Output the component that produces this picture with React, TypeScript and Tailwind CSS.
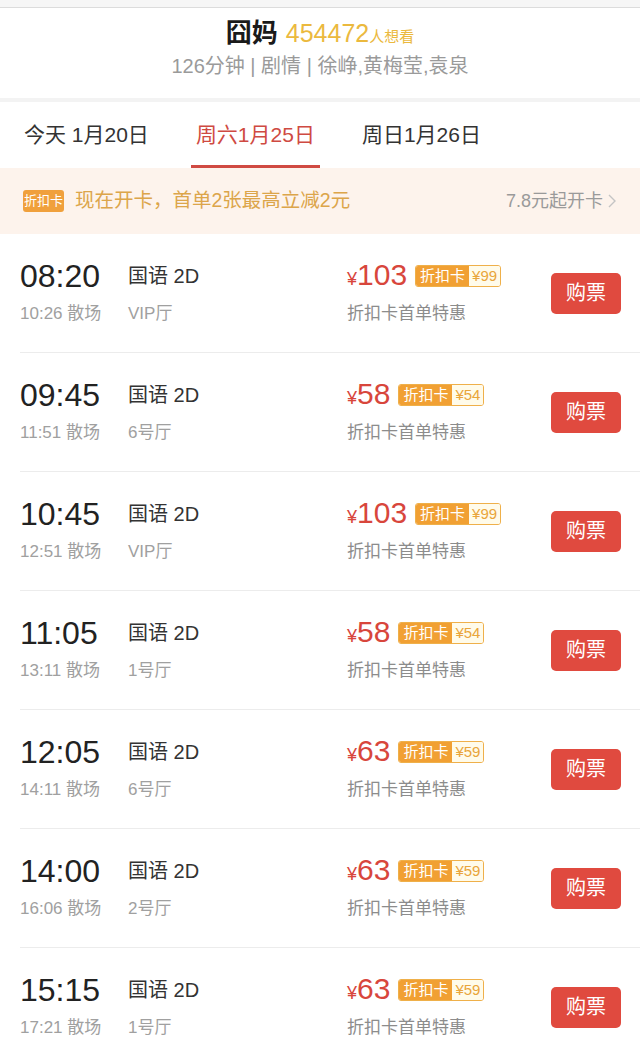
const shows = [
  { start: "08:20", end: "10:26", hall: "VIP厅", price: "103", card: "99" },
  { start: "09:45", end: "11:51", hall: "6号厅", price: "58", card: "54" },
  { start: "10:45", end: "12:51", hall: "VIP厅", price: "103", card: "99" },
  { start: "11:05", end: "13:11", hall: "1号厅", price: "58", card: "54" },
  { start: "12:05", end: "14:11", hall: "6号厅", price: "63", card: "59" },
  { start: "14:00", end: "16:06", hall: "2号厅", price: "63", card: "59" },
  { start: "15:15", end: "17:21", hall: "1号厅", price: "63", card: "59" },
];

const tabs = [
  { label: "今天 1月20日", active: false },
  { label: "周六1月25日", active: true },
  { label: "周日1月26日", active: false },
];

const ShowRow = ({ start, end, hall, price, card }: (typeof shows)[number]) => (
  <div className="pl-5">
    <div className="flex h-[119px] items-center border-b border-[#ececec] pr-[19px]">
      <div className="grid flex-1 grid-cols-[108px_219px_1fr] grid-rows-[36px_24px] gap-y-2 self-start pt-6">
        <div className="flex items-center text-[32px] leading-none text-[#222]">{start}</div>
        <div className="flex items-center text-[20px] text-[#333]">国语 2D</div>
        <div className="flex items-center">
          <span className="text-[#d8463c]">
            <span className="text-[18px]">¥</span>
            <span className="text-[30px] leading-none">{price}</span>
          </span>
          <span className="ml-2 flex h-[22px] items-stretch overflow-hidden rounded-[3px] border border-[#efb04a] text-[15px] leading-[20px]">
            <span className="bg-[#f1a033] px-[4px] text-white">折扣卡</span>
            <span className="bg-[#fffbea] px-[3px] text-[#e9a53a]">¥{card}</span>
          </span>
        </div>
        <div className="flex items-center text-[17px] text-[#a0a0a0]">{end} 散场</div>
        <div className="flex items-center text-[17px] text-[#a0a0a0]">{hall}</div>
        <div className="flex items-center text-[17px] text-[#8c8c8c]">折扣卡首单特惠</div>
      </div>
      <button className="flex h-[41px] w-[70px] items-center justify-center rounded-[5px] bg-[#e04a3f] text-[20px] text-white">
        购票
      </button>
    </div>
  </div>
);

export default function App() {
  return (
    <div
      className="min-h-[1047px] w-[640px] overflow-hidden bg-white"
      style={{ fontFamily: '"Liberation Sans", "Noto Sans CJK SC", sans-serif' }}
    >
      <div className="h-2 border-b border-[#dcdcdc] bg-[#f6f6f6]" />

      <div className="flex h-[90px] flex-col items-center pt-[6px]">
        <div className="flex items-baseline">
          <span className="text-[26px] font-bold text-[#1a1a1a]">囧妈</span>
          <span className="ml-2 text-[25px] text-[#ebb93e]">454472</span>
          <span className="text-[15px] text-[#ebb93e]">人想看</span>
        </div>
        <div className="-mt-[2px] text-[20px] text-[#9a9a9a]">126分钟 | 剧情 | 徐峥,黄梅莹,袁泉</div>
      </div>

      <div className="h-1 bg-[#f3f3f3]" />

      <div className="flex h-[66px] gap-[37px] pl-[19px]">
        {tabs.map((t) => (
          <div
            key={t.label}
            className={`flex items-center border-b-[3px] px-[5px] pt-[3px] text-[21px] ${
              t.active ? "border-[#d04a42] text-[#cf4a42]" : "border-transparent text-[#333]"
            }`}
          >
            {t.label}
          </div>
        ))}
      </div>

      <div className="flex h-[66px] items-center bg-[#fdf3ec] pl-[23px] pr-[22px]">
        <span className="rounded-[3px] bg-[#f0a03c] px-[1px] text-[13px] leading-[22px] text-white">折扣卡</span>
        <span className="ml-[11px] text-[19.5px] text-[#dca54a]">现在开卡，首单2张最高立减2元</span>
        <span className="ml-auto text-[18px] text-[#9a9a9a]">7.8元起开卡</span>
        <svg className="ml-[3px] h-4 w-3" viewBox="0 0 12 16" fill="none" stroke="#c4c4c4" strokeWidth="1.4">
          <path d="M3 2l6 6-6 6" />
        </svg>
      </div>

      {shows.map((s) => (
        <ShowRow key={s.start} {...s} />
      ))}
    </div>
  );
}
